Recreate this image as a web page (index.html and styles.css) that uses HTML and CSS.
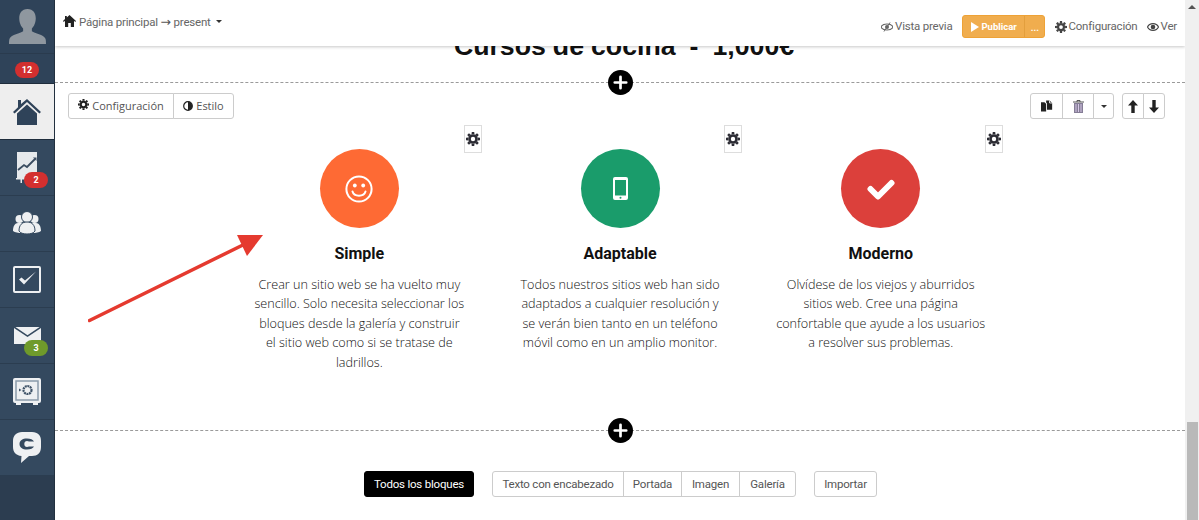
FILE: index.html
```html
<!DOCTYPE html>
<html lang="es">
<head>
<meta charset="utf-8">
<title>Editor de página</title>
<link rel="stylesheet" href="styles.css">
</head>
<body>
<svg class="defs" width="0" height="0" aria-hidden="true">
  <symbol id="gear" viewBox="0 0 16 16">
    <circle cx="8" cy="8" r="4" fill="none" stroke="currentColor" stroke-width="3"/>
    <path d="M6.600 0h2.800l.3 2.600h-3.400zM6.600 16h2.800l.3-2.600h-3.400zM0 6.600v2.800l2.600.3v-3.400zM16 6.600v2.800l-2.600.3v-3.400zM1.400 3.400l2-2 2.100 1.700-2.400 2.400zM14.600 3.400l-2-2-2.100 1.700 2.400 2.400zM1.400 12.600l2 2 2.100-1.700-2.400-2.400zM14.600 12.600l-2 2-2.100-1.700 2.400-2.400z" fill="currentColor"/>
  </symbol>
  <symbol id="plus" viewBox="0 0 24 24">
    <circle cx="12" cy="12" r="12" fill="#000"/>
    <path d="M12 6.500v11M6.500 12h11" stroke="#fff" stroke-width="2.600" stroke-linecap="round"/>
  </symbol>
</svg>

<div class="app">
  <nav class="sidebar">
    <div class="side-avatar">
      <svg width="37" height="35" viewBox="0 0 38 36"><path d="M19 0c6 0 8.500 4.500 8.500 9.500 0 4-1.700 8.500-4 10.500v3c3 2 12 3.500 14 7.500 .5 1.500.5 3.500.5 5.500H0c0-2 0-4 .5-5.500 2-4 11-5.500 14-7.500v-3c-2.300-2-4-6.500-4-10.500C10.500 4.500 13 0 19 0z" fill="#8f979f"/></svg>
    </div>
    <div class="side-count"><span class="badge badge-red">12</span></div>
    <div class="side-item side-active">
      <svg width="28" height="26" viewBox="0 0 28 26"><path d="M5 1h3v4L14 0l14 13-1.600 1.600L14 3 1.600 14.600 0 13l5-4.700z" fill="#2f4359"/><path d="M4 14.500 14 5.500l10 9V26H4z" fill="#2f4359"/></svg>
    </div>
    <div class="side-item">
      <svg width="22" height="31" viewBox="0 0 22 31"><path d="M1 0h20v26H1z" fill="#e6e9ec"/><path d="M2 18l6-5 3 2 8-8" fill="none" stroke="#3a4c60" stroke-width="1.800"/><path d="M17 5.500h3.500V9z" fill="#3a4c60"/><path d="M0 26h10v1.500H6V31H4.500v-3.500H0z" fill="#e6e9ec"/></svg>
      <span class="badge badge-red badge-float">2</span>
    </div>
    <div class="side-item">
      <svg width="28" height="25" viewBox="0 0 28 25"><circle cx="6.500" cy="8" r="4" fill="#eef0f2"/><circle cx="21.500" cy="8" r="4" fill="#eef0f2"/><path d="M0 20c0-5 2-8 5-8h4v10c-4 0-7-.5-9-2zM28 20c0-5-2-8-5-8h-4v10c4 0 7-.5 9-2z" fill="#eef0f2"/><circle cx="14" cy="6" r="5.500" fill="#eef0f2" stroke="#34495f"/><path d="M6 20c0-6 3-9 8-9s8 3 8 9c-2 4-14 4-16 0z" fill="#eef0f2" stroke="#34495f"/></svg>
    </div>
    <div class="side-item">
      <svg width="28" height="27" viewBox="0 0 28 27"><rect x="1" y="1" width="26" height="25" rx="1" fill="none" stroke="#eef0f2" stroke-width="2"/><path d="M6 13.500l5 5L23 5.500l-11 9-3.500-3z" fill="#eef0f2"/></svg>
    </div>
    <div class="side-item">
      <svg width="27" height="17" viewBox="0 0 27 17"><path d="M0 0h27v17H0z" fill="#eef0f2"/><path d="M0 0l13.500 9L27 0" fill="none" stroke="#34495f" stroke-width="1.500"/></svg>
      <span class="badge badge-green badge-float">3</span>
    </div>
    <div class="side-item">
      <svg width="28" height="27" viewBox="0 0 28 27"><rect width="28" height="25" rx="2" fill="#eef0f2"/><path d="M3 25h5v2H3zM20 25h5v2h-5z" fill="#eef0f2"/><rect x="3" y="3" width="22" height="19" fill="none" stroke="#8b9baa" stroke-width="1.500"/><circle cx="14.500" cy="12" r="4" fill="none" stroke="#3f5368" stroke-width="2.200" stroke-dasharray="2 .6"/><path d="M6 10.500 8.500 12 6 13.500z" fill="#3f5368"/></svg>
    </div>
    <div class="side-item">
      <svg width="28" height="31" viewBox="0 0 28 31"><path d="M9 0h10c6 0 9 3.500 9 9v6c0 6-3.500 9-9 9h-3l-8 7 .5-7C3 23.500 0 20 0 15V9c0-5.500 3.500-9 9-9z" fill="#eef0f2"/><path d="M21 9.500C20 7.500 17.500 6.500 14 6.500c-4.500 0-7.500 2-7.500 5.500s3 5.500 7.500 5.500c3.500 0 6-1 7-3h-5c-.5.300-1.200.5-2 .5-1.600 0-2.700-1-2.700-3s1.100-3 2.700-3c.8 0 1.500.2 2 .5z" fill="#34495f"/></svg>
    </div>
    <div class="side-rest"></div>
  </nav>

  <main class="workspace">
    <header class="topbar">
      <div class="crumb">
        <svg class="ico-home" width="13" height="12" viewBox="0 0 13 12"><path d="M6.500 0 13 6l-.8.900L11 5.800V12H7.800V8H5.200v4H2V5.800L.8 6.900 0 6l2-1.900V1h1.800v1.500z" fill="#222"/></svg>
        <span>Página principal <span class="crumb-arrow">→</span> present</span><i class="caret"></i>
      </div>
      <div class="top-actions">
        <span class="top-link"><svg width="12" height="10" viewBox="0 0 12 10"><path d="M0 5c2-4 10-4 12 0-2 4-10 4-12 0z" fill="none" stroke="#666" stroke-width="1.200"/><circle cx="6" cy="5" r="2" fill="#666"/><path d="M3 9.500 9 .5" stroke="#666"/></svg>Vista previa</span>
        <div class="publish">
          <span class="publish-main"><svg width="8" height="10" viewBox="0 0 8 10"><path d="M0 0l8 5-8 5z" fill="#fff"/></svg>Publicar</span>
          <span class="publish-more">...</span>
        </div>
        <span class="top-link top-link-gear"><svg width="12" height="12"><use href="#gear"/></svg>Configuración</span>
        <span class="top-link"><svg width="12" height="10" viewBox="0 0 12 10"><path d="M.5 5c2-4.500 9-4.500 11 0-2 4.500-9 4.500-11 0z" fill="none" stroke="#444" stroke-width="1.200"/><circle cx="6" cy="5" r="2.300" fill="#444"/></svg>Ver</span>
      </div>
    </header>

    <h1 class="page-title">Cursos de cocina&nbsp;&nbsp;-&nbsp;&nbsp;1,000€</h1>

    <section class="block">
      <div class="divider"><svg class="plus" width="25" height="25"><use href="#plus"/></svg></div>

      <div class="block-tools">
        <div class="btn-group">
          <span class="btn btn-config"><svg class="ico-raised" width="11" height="11"><use href="#gear"/></svg>Configuración</span>
          <span class="btn btn-style"><svg width="10" height="10" viewBox="0 0 10 10"><circle cx="5" cy="5" r="4.300" fill="#fff" stroke="#222" stroke-width="1.200"/><path d="M5 .7a4.300 4.300 0 0 1 0 8.600z" fill="#222"/></svg>Estilo</span>
        </div>
        <div class="tools-right">
          <div class="btn-group">
            <span class="btn btn-icon btn-copy"><svg width="12" height="12" viewBox="0 0 14 13"><path d="M0 2h4l2 2v9H0z" fill="#222"/><path d="M6 0h4l3 3v8H7V3.500L6 2.500z" fill="#222"/><path d="M10 0v3h3" fill="none" stroke="#fff"/></svg></span>
            <span class="btn btn-icon btn-trash"><svg width="11" height="13" viewBox="0 0 11 13"><path d="M0 2h11M4 2V.500h3V2" fill="none" stroke="#555" stroke-width="1"/><path d="M1 3h9v10H1z" fill="#857d96"/><path d="M3 4v8M5.500 4v8M8 4v8" stroke="#d6c8e6"/></svg></span>
            <span class="btn btn-icon btn-drop"><i class="caret"></i></span>
          </div>
          <div class="btn-group">
            <span class="btn btn-icon btn-arrow"><svg width="10" height="13" viewBox="0 0 10 13"><path d="M5 0l5 5.500H6.700V13H3.300V5.500H0z" fill="#222"/></svg></span>
            <span class="btn btn-icon btn-arrow"><svg width="10" height="13" viewBox="0 0 10 13"><path d="M5 13l5-5.500H6.700V0H3.300v7.500H0z" fill="#222"/></svg></span>
          </div>
        </div>
      </div>

      <div class="features">
        <article class="feature">
          <span class="gear-tile"><svg width="14" height="14"><use href="#gear"/></svg></span>
          <div class="disc disc-orange">
            <svg width="28" height="28" viewBox="0 0 28 28"><circle cx="14" cy="14" r="12.600" fill="none" stroke="#fff" stroke-width="2"/><circle cx="9.800" cy="10.500" r="1.900" fill="#fff"/><circle cx="18.200" cy="10.500" r="1.900" fill="#fff"/><path d="M7.500 16.500c1.500 5.500 11.500 5.500 13 0" fill="none" stroke="#fff" stroke-width="2" stroke-linecap="round"/></svg>
          </div>
          <h2>Simple</h2>
          <p>Crear un sitio web se ha vuelto muy<br>sencillo. Solo necesita seleccionar los<br>bloques desde la galería y construir<br>el sitio web como si se tratase de<br>ladrillos.</p>
        </article>
        <article class="feature">
          <span class="gear-tile"><svg width="14" height="14"><use href="#gear"/></svg></span>
          <div class="disc disc-green">
            <svg width="15" height="23" viewBox="0 0 15 23"><path d="M2 0h11a2 2 0 0 1 2 2v19a2 2 0 0 1-2 2H2a2 2 0 0 1-2-2V2a2 2 0 0 1 2-2zM2 3v15.500h11V3z" fill="#fff" fill-rule="evenodd"/><circle cx="7.500" cy="20.700" r="1" fill="#1a9c6b"/></svg>
          </div>
          <h2>Adaptable</h2>
          <p>Todos nuestros sitios web han sido<br>adaptados a cualquier resolución y<br>se verán bien tanto en un teléfono<br>móvil como en un amplio monitor.</p>
        </article>
        <article class="feature">
          <span class="gear-tile"><svg width="14" height="14"><use href="#gear"/></svg></span>
          <div class="disc disc-red">
            <svg width="28" height="22" viewBox="0 0 28 22"><path d="M3.500 11 11 18.500 24.500 5" fill="none" stroke="#fff" stroke-width="6" stroke-linecap="round" stroke-linejoin="round"/></svg>
          </div>
          <h2>Moderno</h2>
          <p>Olvídese de los viejos y aburridos<br>sitios web. Cree una página<br>confortable que ayude a los usuarios<br>a resolver sus problemas.</p>
        </article>
      </div>
    </section>

    <div class="divider divider-bottom"><svg class="plus" width="25" height="25"><use href="#plus"/></svg></div>

    <div class="gallery-bar">
      <span class="btn btn-dark">Todos los bloques</span>
      <div class="btn-group">
        <span class="btn btn-text btn-w-long">Texto con encabezado</span>
        <span class="btn btn-text btn-w-mid">Portada</span>
        <span class="btn btn-text btn-w-mid">Imagen</span>
        <span class="btn btn-text btn-w-end">Galería</span>
      </div>
      <span class="btn btn-single">Importar</span>
    </div>

    <svg class="annotation" width="180" height="92" viewBox="0 0 180 92"><path d="M1.500 87.500 163 8" stroke="#e53a2f" stroke-width="3.500" stroke-linecap="round"/><path d="M175 2H149L159 23z" fill="#e53a2f"/></svg>
  </main>

  <div class="scrollbar">
    <i class="scroll-up"></i>
    <div class="scroll-thumb"></div>
  </div>
</div>
</body>
</html>
```

FILE: styles.css
```css
* { box-sizing: border-box; }
html, body { margin: 0; height: 100%; overflow: hidden; background: #fff; }
body { font-family: Roboto, "Liberation Sans", sans-serif; color: #333; }
.defs { position: absolute; }
.app { display: flex; height: 520px; width: 1199px; }

/* Sidebar */
.sidebar { width: 55px; flex: none; display: flex; flex-direction: column; background: #34495f; border-right: 1px solid #22303f; color: #eef0f2; }
.side-avatar { height: 54px; display: flex; align-items: flex-end; justify-content: center; padding-bottom: 9px; background: #2f4359; border-bottom: 1px solid #2a3b4e; }
.side-count { height: 30px; display: flex; align-items: center; justify-content: center; padding-top: 2px; background: #2f4359; border-bottom: 1px solid #1f2d3c; }
.side-item { position: relative; height: 56px; flex: none; display: flex; align-items: center; justify-content: center; border-bottom: 1px solid #2b3d50; }
.side-active { background: #eeeeee; border-bottom: 1px solid #1f2d3c; }
.side-rest { flex: 1; background: #2c3d50; }
.badge { display: inline-flex; align-items: center; justify-content: center; height: 16px; min-width: 24px; padding: 0 6px; border-radius: 8px; font: 700 9px/16px Roboto, "Liberation Sans", sans-serif; color: #fff; }
.badge-red { background: #d32f2f; }
.badge-green { background: #6f9a2b; }
.badge-float { position: absolute; left: 24px; top: 32px; }

/* Workspace */
.workspace { position: relative; flex: 1; min-width: 0; overflow: hidden; }
.topbar { position: relative; z-index: 2; height: 46px; display: flex; justify-content: space-between; padding: 14px 8px 0 8px; background: #fff; box-shadow: 0 1px 3px rgba(0,0,0,.22); font-size: 11.500px; letter-spacing: -.2px; color: #666; }
.crumb { display: flex; align-items: flex-start; height: 15px; line-height: 15px; }
.crumb-arrow { font: 12.500px/15px "DejaVu Sans", sans-serif; letter-spacing: 0; color: #555; }
.ico-home { margin-right: 3px; margin-top: 1px; }
.caret { display: inline-block; width: 0; height: 0; margin-left: 5px; border-left: 3.500px solid transparent; border-right: 3.500px solid transparent; border-top: 3.500px solid #333; align-self: center; }
.top-actions { display: flex; align-items: flex-start; margin-top: 1px; }
.top-link { display: inline-flex; align-items: center; gap: 2px; height: 23px; line-height: 23px; }
.top-link svg { color: #444; }
.top-link-gear { gap: 1px; margin-right: 9px; }
.publish { display: flex; height: 23px; margin: 0 10px; background: #f0ad4e; border: 1px solid #eea236; border-radius: 3px; color: #fff; font-size: 9.500px; letter-spacing: 0; font-weight: 700; line-height: 23px; }
.publish-main { display: flex; align-items: center; gap: 2px; width: 62px; padding-left: 8px; border-right: 1px solid #e39f3d; }
.publish-more { width: 19px; text-align: center; }

/* Page content */
.page-title { position: relative; z-index: 1; margin: -18px 0 0; height: 36px; padding-left: 8px; text-align: center; font: 700 26.700px/36px "Liberation Sans", sans-serif; word-spacing: -.4px; color: #111; }
.block { position: relative; }
.divider { position: relative; height: 0; margin-top: 18px; border-top: 1px dashed #9a9a9a; }
.plus { position: absolute; left: 553px; top: -13px; }
.block-tools { display: flex; justify-content: space-between; padding: 10px 20px 0 13px; }
.tools-right { display: flex; gap: 8px; }
.btn-group { display: flex; }
.btn { display: inline-flex; align-items: center; justify-content: center; gap: 3px; height: 26px; padding: 0 10px 1px; background: #fff; border: 1px solid #ccc; font-size: 11.500px; letter-spacing: -.2px; color: #555; white-space: nowrap; }
.btn-group .btn + .btn { border-left: 1px solid #ccc; margin-left: -1px; }
.btn-group .btn:first-child { border-radius: 3px 0 0 3px; }
.btn-group .btn:last-child { border-radius: 0 3px 3px 0; }
.btn-config, .btn-style { font-family: "Open Sans", sans-serif; font-size: 11px; letter-spacing: 0; }
.btn-config { width: 106px; padding: 0 0 1px; }
.btn-style { width: 61px; padding: 0 0 1px; }
.ico-raised { margin-bottom: 2px; }
.btn-icon { padding: 0; }
.btn-copy { width: 33px; }
.btn-trash { width: 32px; }
.btn-drop { width: 21px; }
.btn-drop .caret { margin: 0; }
.btn-arrow { width: 22px; }
.btn svg { color: #222; }
.btn-dark { width: 110px; background: #000; border-color: #000; border-radius: 3px; color: #fff; }
.btn-single { width: 63px; border-radius: 3px; }
.btn-w-long { width: 132px; }
.btn-w-mid { width: 59px; }
.btn-w-end { width: 57px; }

.features { display: grid; grid-template-columns: repeat(3, 260.700px); justify-content: start; margin-left: 174px; margin-top: 6px; height: 305px; }
.feature { position: relative; display: flex; flex-direction: column; align-items: center; padding-top: 24px; }
.gear-tile { position: absolute; right: 8px; top: 0; width: 18px; height: 28px; display: flex; align-items: center; justify-content: center; border: 1px solid #ddd; background: #fff; color: #2c2c34; }
.disc { width: 79px; height: 79px; border-radius: 50%; display: flex; align-items: center; justify-content: center; }
.disc-orange { background: #fe6a34; }
.disc-green { background: #1a9c6b; }
.disc-red { background: #dc403b; }
.feature h2 { margin: 16px 0 0; font: 700 16px/19px Roboto, "Liberation Sans", sans-serif; color: #111; }
.feature p { margin: 11.500px 0 0; font: 300 12.620px/19.500px "Open Sans", sans-serif; text-align: center; color: #111; white-space: nowrap; }

.divider-bottom { margin-top: 0; }
.gallery-bar { display: flex; align-items: flex-start; justify-content: flex-start; padding: 40px 0 0 309px; }
.gallery-bar .btn-group { margin: 0 18px; }
.btn-text { padding: 0 0 1px; }
.annotation { position: absolute; left: 33px; top: 233px; z-index: 1; }

/* Scrollbar */
.scrollbar { position: relative; width: 14px; flex: none; background: #f0f0f0; display: flex; flex-direction: column; justify-content: flex-end; }
.scroll-up { position: absolute; left: 3px; top: 5px; width: 0; height: 0; border-left: 4.500px solid transparent; border-right: 4.500px solid transparent; border-bottom: 4.500px solid #555; }
.scroll-thumb { height: 98px; margin: 0 1px 0 2px; background: #b9b9b9; }
```
